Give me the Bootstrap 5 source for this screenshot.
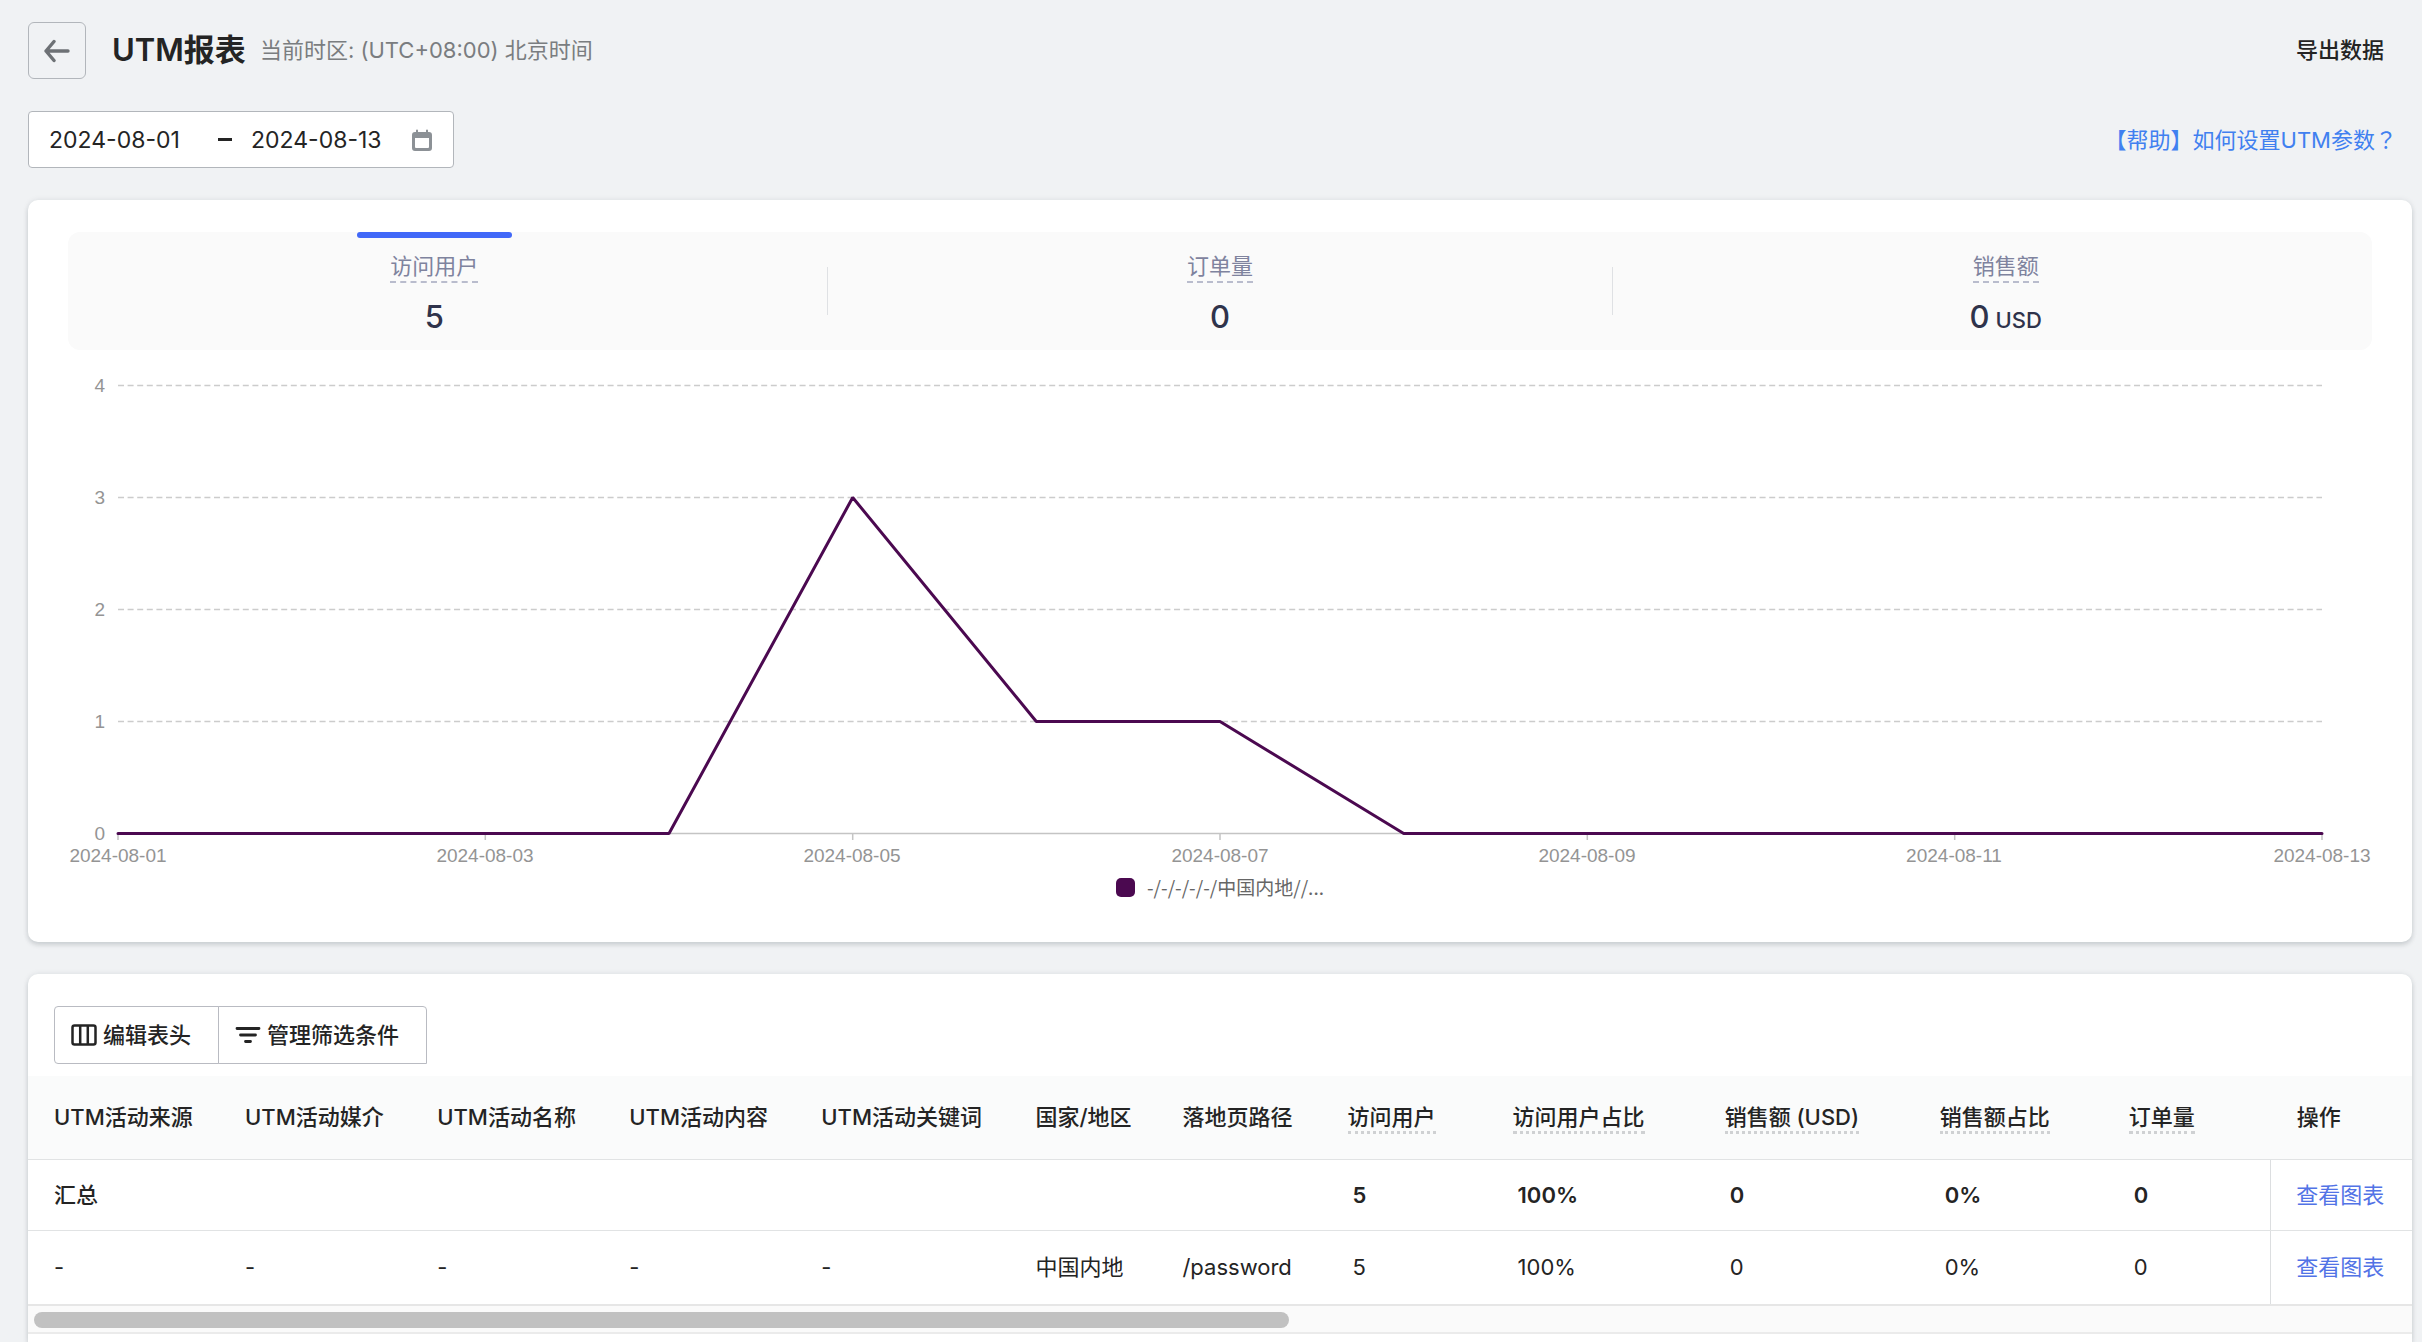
<!DOCTYPE html>
<html lang="zh-CN">
<head>
<meta charset="utf-8">
<meta name="viewport" content="width=device-width, initial-scale=1">
<title>UTM报表</title>
<link rel="stylesheet" href="https://cdn.jsdelivr.net/npm/bootstrap@5.3.0/dist/css/bootstrap.min.css">
<style>
  body { background: #f0f2f4; color: #242424; font-family: Inter, "Noto Sans CJK SC", sans-serif; font-size: 22px; line-height: 32px; }
  a { text-decoration: none; }
  .page { min-height: 100vh; gap: 32px; padding: 22px 10px 0 28px; }
  .back-btn { width: 58px; height: 57px; border: 1px solid #b2b6bb; border-radius: 6px; }
  .page-title { font-size: 31px; line-height: 40px; font-weight: 600; margin: 0 14px 0 26px; }
  .zone { color: #7a7d80; }
  .page-title, .zone { padding-bottom: 1px; }
  .export-btn { color: inherit; font-size: 22px; line-height: 32px; font-weight: 500; padding: 0 28px 2px; border: 0; }
  .range { width: 426px; height: 57px; border: 1px solid #b2b6bb; border-radius: 4px; padding: 0 20px; }
  .range input { width: 148px; border: 0; padding: 0; background: transparent; color: inherit; outline: 0; font-size: 23px; }
  .range .to-mark { width: 14px; height: 3px; background: #242424; margin: 0 19px 0 21px; }
  .range input + svg { margin-left: 13px; }
  .help-link { color: #4080f0; padding-right: 15px; }
  .help-link .wide { font-family: "Noto Sans CJK TC", sans-serif; line-height: 1; }
  .panel { background: #fff; border-radius: 10px; box-shadow: 0 0 6px rgba(30,40,50,.08), 0 3px 5px rgba(30,40,50,.14); }
  .report { padding: 32px 40px 40px; }
  .metrics { background: #fafafa; border-radius: 12px; height: 118px; }
  .metric { flex: 1 1 0; border: 0; background: none; padding: 20px 0 0; position: relative; line-height: 29px; }
  .metric.current::before { content: ""; position: absolute; top: 0; left: 50%; margin-left: -77px; width: 155px; height: 6px; border-radius: 3px; background: #4168f8; }
  .metric-name { color: #7f839e; border-bottom: 2px dashed #b9bccd; }
  .metric-num { color: #2f334b; font-size: 31px; line-height: 40px; font-weight: 500; margin-top: 14px; }
  .metric-num span { font-size: 22px; }
  .split { width: 1px; height: 48px; background: #dfe1e4; margin: 0 26px; }
  .chart text { font-family: "Liberation Sans", sans-serif; font-size: 19px; fill: #949494; }
  .chart .key { font-family: "Noto Sans CJK SC", sans-serif; fill: #666; }
  .list-panel { border-radius: 10px 10px 0 0; }
  .tools { padding: 32px 26px 12px; }
  .tools .btn { height: 58px; border: 1px solid #b9bbc2; border-radius: 4px; color: inherit; font-size: 22px; line-height: 32px; font-weight: 500; gap: 6px; padding: 0 27px 0 16px; }
  .tools .btn:first-child { border-top-right-radius: 0; border-bottom-right-radius: 0; }
  .tools .btn + .btn { border-radius: 0 4px 0 0; margin-left: -1px; }
  .report-table { table-layout: fixed; width: 100%; }
  .report-table th, .report-table td { padding: 0 0 0 25px; white-space: nowrap; border-bottom: 1px solid #e1e3e4; }
  .report-table tr > :first-child { padding-left: 26px; }
  .report-table thead th { height: 83px; background: #fafbfb; font-weight: 500; }
  .report-table .sum > * { height: 71px; font-weight: 500; }
  .report-table .item > td { height: 75px; border-bottom: 2px solid #e6e6e6; }
  .report-table .qty { padding-left: 30px; }
  .report-table .sum .qty { font-weight: 600; }
  .report-table td.act { border-left: 1px solid #dcdee0; padding-left: 25px; font-weight: 400; }
  .report-table th.act { padding-left: 26px; }
  .act a { color: #5273e6; }
  .tip { display: inline-block; border-bottom: 3px dotted #cfd1d3; line-height: 27px; margin-top: 3px; }
  .w-a { width: 192px; } .w-b { width: 214px; } .w-c { width: 147px; } .w-d { width: 165px; }
  .w-e { width: 212px; } .w-f { width: 215px; } .w-g { width: 189px; } .w-h { width: 167px; } .w-i { width: 141px; }
  .scroll-track { height: 28px; background: #fafafa; border-bottom: 2px solid #ebebeb; padding: 6px; }
  .scroll-thumb { height: 16px; width: 52.9%; border-radius: 8px; background: #c1c1c1; }
</style>
<script defer src="https://cdn.jsdelivr.net/npm/bootstrap@5.3.0/dist/js/bootstrap.bundle.min.js"></script>
</head>
<body>
<main class="page d-flex flex-column">
  <header class="d-flex align-items-center">
    <button type="button" class="back-btn btn p-0 d-flex align-items-center justify-content-center" aria-label="返回">
      <svg width="26" height="24" viewBox="0 0 26 24" fill="none" stroke="#6d7175" stroke-width="3.400" stroke-linecap="round" stroke-linejoin="round"><path d="M24 12H2M10 2.500L2 12l8 9.500"/></svg>
    </button>
    <h1 class="page-title">UTM报表</h1>
    <span class="zone">当前时区: (UTC+08:00) 北京时间</span>
    <button type="button" class="export-btn btn ms-auto">导出数据</button>
  </header>

  <div class="d-flex align-items-center justify-content-between">
    <div class="range bg-white d-flex align-items-center">
      <input type="text" value="2024-08-01" aria-label="开始日期">
      <span class="to-mark flex-shrink-0"></span>
      <input type="text" value="2024-08-13" aria-label="结束日期">
      <svg class="flex-shrink-0" width="20" height="22" viewBox="0 0 20 22"><path fill="#8c9196" fill-rule="evenodd" d="M4 1.500a1 1 0 0 1 2 0V3h8V1.500a1 1 0 0 1 2 0V3h1a3 3 0 0 1 3 3v13a3 3 0 0 1-3 3H3a3 3 0 0 1-3-3V6a3 3 0 0 1 3-3h1zM3 9v9a1 1 0 0 0 1 1h12a1 1 0 0 0 1-1V9z"/></svg>
    </div>
    <a href="#" class="help-link">【帮助】如何设置UTM参数<span class="wide" lang="zh-Hant">？</span></a>
  </div>

  <section class="panel report">
    <div class="metrics d-flex align-items-center">
      <button type="button" class="metric current h-100 d-flex flex-column align-items-center"><span class="metric-name">访问用户</span><span class="metric-num">5</span></button>
      <div class="split"></div>
      <button type="button" class="metric h-100 d-flex flex-column align-items-center"><span class="metric-name">订单量</span><span class="metric-num">0</span></button>
      <div class="split"></div>
      <button type="button" class="metric h-100 d-flex flex-column align-items-center"><span class="metric-name">销售额</span><span class="metric-num">0<span> USD</span></span></button>
    </div>
    <svg class="chart d-block w-100" viewBox="0 0 2304 552" overflow="visible" role="img" aria-label="访问用户趋势">
      <g stroke="#cccccc" stroke-width="1.500" stroke-dasharray="6 3.600"><path d="M50 35.500H2254M50 147.500H2254M50 259.500H2254M50 371.500H2254"/></g>
      <path d="M50 483.500H2254" stroke="#c4c4c4" stroke-width="1.500"/>
      <path d="M50 484v6M417.300 484v6M784.700 484v6M1152 484v6M1519.300 484v6M1886.700 484v6M2254 484v6" stroke="#c4c4c4" stroke-width="1.500"/>
      <g text-anchor="end"><text x="37" y="42">4</text><text x="37" y="154">3</text><text x="37" y="266">2</text><text x="37" y="378">1</text><text x="37" y="490">0</text></g>
      <g text-anchor="middle"><text x="50" y="512">2024-08-01</text><text x="417" y="512">2024-08-03</text><text x="784" y="512">2024-08-05</text><text x="1152" y="512">2024-08-07</text><text x="1519" y="512">2024-08-09</text><text x="1886" y="512">2024-08-11</text><text x="2254" y="512">2024-08-13</text></g>
      <path d="M50 483.500H601L784.700 147.500L968.300 371.500H1152L1335.700 483.500H2254" fill="none" stroke="#4b0950" stroke-width="3" stroke-linejoin="bevel" stroke-linecap="round"/>
      <rect x="1048" y="528" width="19" height="19" rx="5" fill="#4b0950"/>
      <text class="key" x="1079" y="545">-/-/-/-/-/中国内地//...</text>
    </svg>
  </section>

  <section class="panel list-panel flex-grow-1">
    <div class="tools d-flex">
      <button type="button" class="btn d-flex align-items-center">
        <svg width="26" height="22" viewBox="0 0 26 22" fill="none" stroke="#242424" stroke-width="2.500"><rect x="1.500" y="1.500" width="23" height="19" rx="2"/><path d="M9.200 1.500v19M16.800 1.500v19"/></svg>编辑表头
      </button>
      <button type="button" class="btn d-flex align-items-center">
        <svg width="26" height="18" viewBox="0 0 26 18" fill="none" stroke="#242424" stroke-width="2.800" stroke-linecap="round"><path d="M2 2.500h22M5.500 9h15M10.500 15.500h5"/></svg>管理筛选条件
      </button>
    </div>
    <table class="report-table">
      <colgroup><col class="w-a"><col class="w-a"><col class="w-a"><col class="w-a"><col class="w-b"><col class="w-c"><col class="w-d"><col class="w-d"><col class="w-e"><col class="w-f"><col class="w-g"><col class="w-h"><col class="w-i"></colgroup>
      <thead>
        <tr><th>UTM活动来源</th><th>UTM活动媒介</th><th>UTM活动名称</th><th>UTM活动内容</th><th>UTM活动关键词</th><th>国家/地区</th><th>落地页路径</th><th><span class="tip">访问用户</span></th><th><span class="tip">访问用户占比</span></th><th><span class="tip">销售额 (USD)</span></th><th><span class="tip">销售额占比</span></th><th><span class="tip">订单量</span></th><th class="act">操作</th></tr>
      </thead>
      <tbody>
        <tr class="sum"><th scope="row">汇总</th><td></td><td></td><td></td><td></td><td></td><td></td><td class="qty">5</td><td class="qty">100%</td><td class="qty">0</td><td class="qty">0%</td><td class="qty">0</td><td class="act"><a href="#">查看图表</a></td></tr>
        <tr class="item"><td>-</td><td>-</td><td>-</td><td>-</td><td>-</td><td>中国内地</td><td>/password</td><td class="qty">5</td><td class="qty">100%</td><td class="qty">0</td><td class="qty">0%</td><td class="qty">0</td><td class="act"><a href="#">查看图表</a></td></tr>
      </tbody>
    </table>
    <div class="scroll-track"><div class="scroll-thumb"></div></div>
  </section>
</main>
</body>
</html>
